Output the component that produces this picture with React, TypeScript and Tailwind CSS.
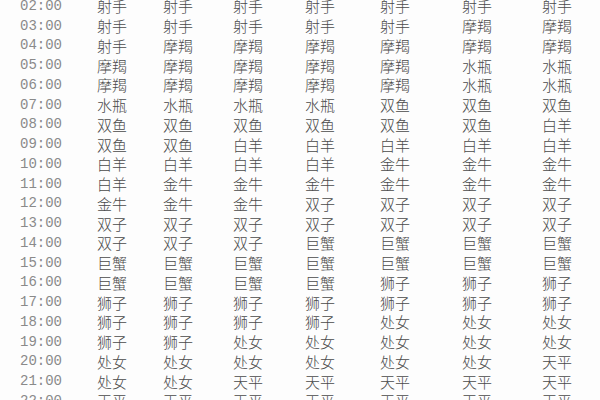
const rows: [string, string[]][] = [
  ["02:00", ["射手", "射手", "射手", "射手", "射手", "射手", "射手"]],
  ["03:00", ["射手", "射手", "射手", "射手", "射手", "摩羯", "摩羯"]],
  ["04:00", ["射手", "摩羯", "摩羯", "摩羯", "摩羯", "摩羯", "摩羯"]],
  ["05:00", ["摩羯", "摩羯", "摩羯", "摩羯", "摩羯", "水瓶", "水瓶"]],
  ["06:00", ["摩羯", "摩羯", "摩羯", "摩羯", "摩羯", "水瓶", "水瓶"]],
  ["07:00", ["水瓶", "水瓶", "水瓶", "水瓶", "双鱼", "双鱼", "双鱼"]],
  ["08:00", ["双鱼", "双鱼", "双鱼", "双鱼", "双鱼", "双鱼", "白羊"]],
  ["09:00", ["双鱼", "双鱼", "白羊", "白羊", "白羊", "白羊", "白羊"]],
  ["10:00", ["白羊", "白羊", "白羊", "白羊", "金牛", "金牛", "金牛"]],
  ["11:00", ["白羊", "金牛", "金牛", "金牛", "金牛", "金牛", "金牛"]],
  ["12:00", ["金牛", "金牛", "金牛", "双子", "双子", "双子", "双子"]],
  ["13:00", ["双子", "双子", "双子", "双子", "双子", "双子", "双子"]],
  ["14:00", ["双子", "双子", "双子", "巨蟹", "巨蟹", "巨蟹", "巨蟹"]],
  ["15:00", ["巨蟹", "巨蟹", "巨蟹", "巨蟹", "巨蟹", "巨蟹", "巨蟹"]],
  ["16:00", ["巨蟹", "巨蟹", "巨蟹", "巨蟹", "狮子", "狮子", "狮子"]],
  ["17:00", ["狮子", "狮子", "狮子", "狮子", "狮子", "狮子", "狮子"]],
  ["18:00", ["狮子", "狮子", "狮子", "狮子", "处女", "处女", "处女"]],
  ["19:00", ["狮子", "狮子", "处女", "处女", "处女", "处女", "处女"]],
  ["20:00", ["处女", "处女", "处女", "处女", "处女", "处女", "天平"]],
  ["21:00", ["处女", "处女", "天平", "天平", "天平", "天平", "天平"]],
  ["22:00", ["天平", "天平", "天平", "天平", "天平", "天平", "天平"]],
];

export default function App() {
  return (
    <main className="w-[600px] h-[400px] overflow-hidden bg-[#fdfdfd]">
      <div className="-mt-[4px]">
        {rows.map(([time, signs]) => (
          <div
            key={time}
            className="grid grid-cols-[97px_66px_70px_72px_75px_82px_80px_1fr] h-[19.75px] items-center"
          >
            <span className="pl-[20px] font-['Liberation_Mono',monospace] text-[14px] text-[#8a8a8a] leading-none">
              {time}
            </span>
            {signs.map((s, i) => (
              <span
                key={i}
                className="font-['Noto_Sans_CJK_SC',sans-serif] font-light text-[15px] text-[#4a4a4a] leading-none"
              >
                {s}
              </span>
            ))}
          </div>
        ))}
      </div>
    </main>
  );
}
